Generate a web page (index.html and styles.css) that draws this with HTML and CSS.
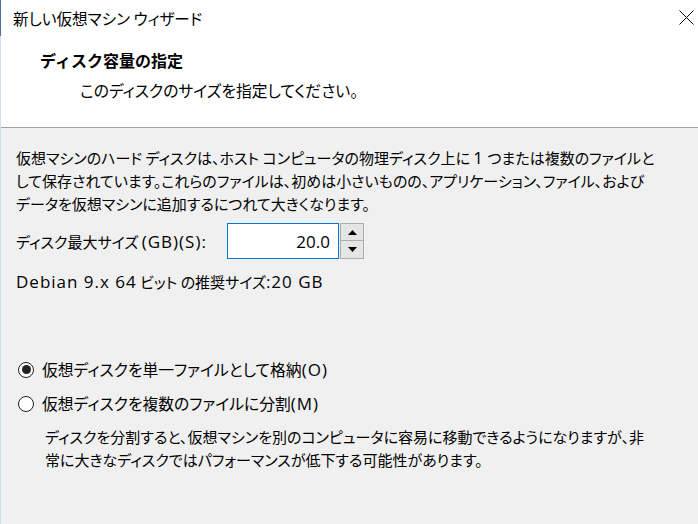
FILE: index.html
```html
<!DOCTYPE html>
<html lang="ja">
  <head>
    <meta charset="UTF-8" />
    <meta name="viewport" content="width=device-width, initial-scale=1.0" />
    <title>新しい仮想マシン ウィザード</title>
    <link rel="stylesheet" href="styles.css">
  </head>
  <body>
    <div class="wizard">
      <header class="titlebar">
        <span class="title">新しい仮想マシン ウィザード</span>
        <button class="close" aria-label="閉じる">
          <svg width="15" height="15" viewBox="0 0 15 15"><path d="M0.5 0.5 L14.5 14.5 M14.5 0.5 L0.5 14.5" stroke="#000" stroke-width="1" fill="none"/></svg>
        </button>
      </header>

      <div class="page-header">
        <h1>ディスク容量の指定</h1>
        <p>このディスクのサイズを指定してください。</p>
      </div>

      <main class="content">
        <p class="intro">仮想マシンのハード ディスクは、ホスト コンピュータの物理ディスク上に <span class="en">1</span> つまたは複数のファイルと<br>して保存されています。これらのファイルは、初めは小さいものの、アプリケーション、ファイル、および<br>データを仮想マシンに追加するにつれて大きくなります。</p>

        <div class="size-row">
          <label for="disk_size">ディスク最大サイズ <span class="en">(GB)(S):</span></label>
          <div class="spin">
            <input id="disk_size" type="text" value="20.0" />
            <div class="spin-buttons">
              <button aria-label="増やす"><svg width="9" height="5" viewBox="0 0 9 5"><path d="M0 5 L4.5 0 L9 5 Z" fill="#000"/></svg></button>
              <button aria-label="減らす"><svg width="9" height="5" viewBox="0 0 9 5"><path d="M0 0 L9 0 L4.5 5 Z" fill="#000"/></svg></button>
            </div>
          </div>
        </div>

        <p class="recommend"><span class="en">Debian 9.x 64</span> ビット の推奨サイズ<span class="en">:20 GB</span></p>

        <div class="options">
          <label class="radio"><span class="dot checked"></span><span>仮想ディスクを単一ファイルとして格納<span class="en">(O)</span></span></label>
          <label class="radio"><span class="dot"></span><span>仮想ディスクを複数のファイルに分割<span class="en">(M)</span></span></label>
          <p class="note">ディスクを分割すると、仮想マシンを別のコンピュータに容易に移動できるようになりますが、非<br>常に大きなディスクではパフォーマンスが低下する可能性があります。</p>
        </div>
      </main>
    </div>
  </body>
</html>
```

FILE: styles.css
```css
:root {
  --panel: #f0f0f0;
  --text: #000;
  --line: #a0a0a0;
  --focus: #0078d7;
}
* { box-sizing: border-box; margin: 0; padding: 0; }
html, body { height: 100%; background: var(--panel); }
body { font-family: "Noto Sans CJK JP", sans-serif; font-size: 15px; color: var(--text); font-feature-settings: "palt"; }
.en { font-family: "Open Sans", sans-serif; font-size: 17px; letter-spacing: 1px; font-feature-settings: normal; }

.wizard { height: 100%; display: flex; flex-direction: column; border-left: 1px solid #d3dcea; }

.titlebar { height: 36px; background: #fff; display: flex; align-items: center; justify-content: space-between; padding-left: 12px; border-left: 1px solid #4f6f9f; margin-left: -1px; }
.titlebar .title { line-height: 36px; font-size: 15.6px; }
.close { background: none; border: none; width: 15px; height: 15px; margin-right: 4px; margin-top: -2px; display: flex; }

.page-header { background: #fff; padding: 13px 0 25px 39px; border-bottom: 1px solid var(--line); }
.page-header h1 { font-size: 16px; font-weight: bold; line-height: 23px; font-feature-settings: normal; }
.page-header p { line-height: 23px; margin-top: 7px; padding-left: 40px; font-size: 15.8px; }

.content { flex: 1; padding: 18px 0 0 15px; }
.intro { line-height: 23px; white-space: nowrap; }

.size-row { display: flex; align-items: center; margin-top: 8px; line-height: 23px; }
.size-row label { width: 211px; }
.spin { display: flex; }
.spin input { width: 112px; height: 36px; border: 1px solid var(--focus); background: #fff; text-align: right; padding-right: 8px; font-family: "Open Sans", sans-serif; font-size: 17px; color: var(--text); outline: none; }
.spin-buttons { display: flex; flex-direction: column; margin-left: 1px; }
.spin-buttons button { width: 24px; height: 18px; background: #e5e5e5; border: 1px solid #adadad; display: flex; align-items: center; justify-content: center; }
.spin-buttons button + button { margin-top: -1px; height: 19px; }

.recommend { line-height: 23px; margin-top: 11px; }

.options { margin-top: 65px; display: flex; flex-direction: column; gap: 11px; }
.radio { display: flex; align-items: center; gap: 8px; line-height: 23px; padding-left: 2px; font-size: 15.8px; }
.dot { width: 16px; height: 16px; border: 1px solid #222; border-radius: 50%; background: #fff; display: flex; align-items: center; justify-content: center; }
.dot.checked::after { content: ""; width: 9px; height: 9px; border-radius: 50%; background: #222; }
.note { line-height: 23px; padding-left: 29px; margin-top: -1px; white-space: nowrap; }
```
